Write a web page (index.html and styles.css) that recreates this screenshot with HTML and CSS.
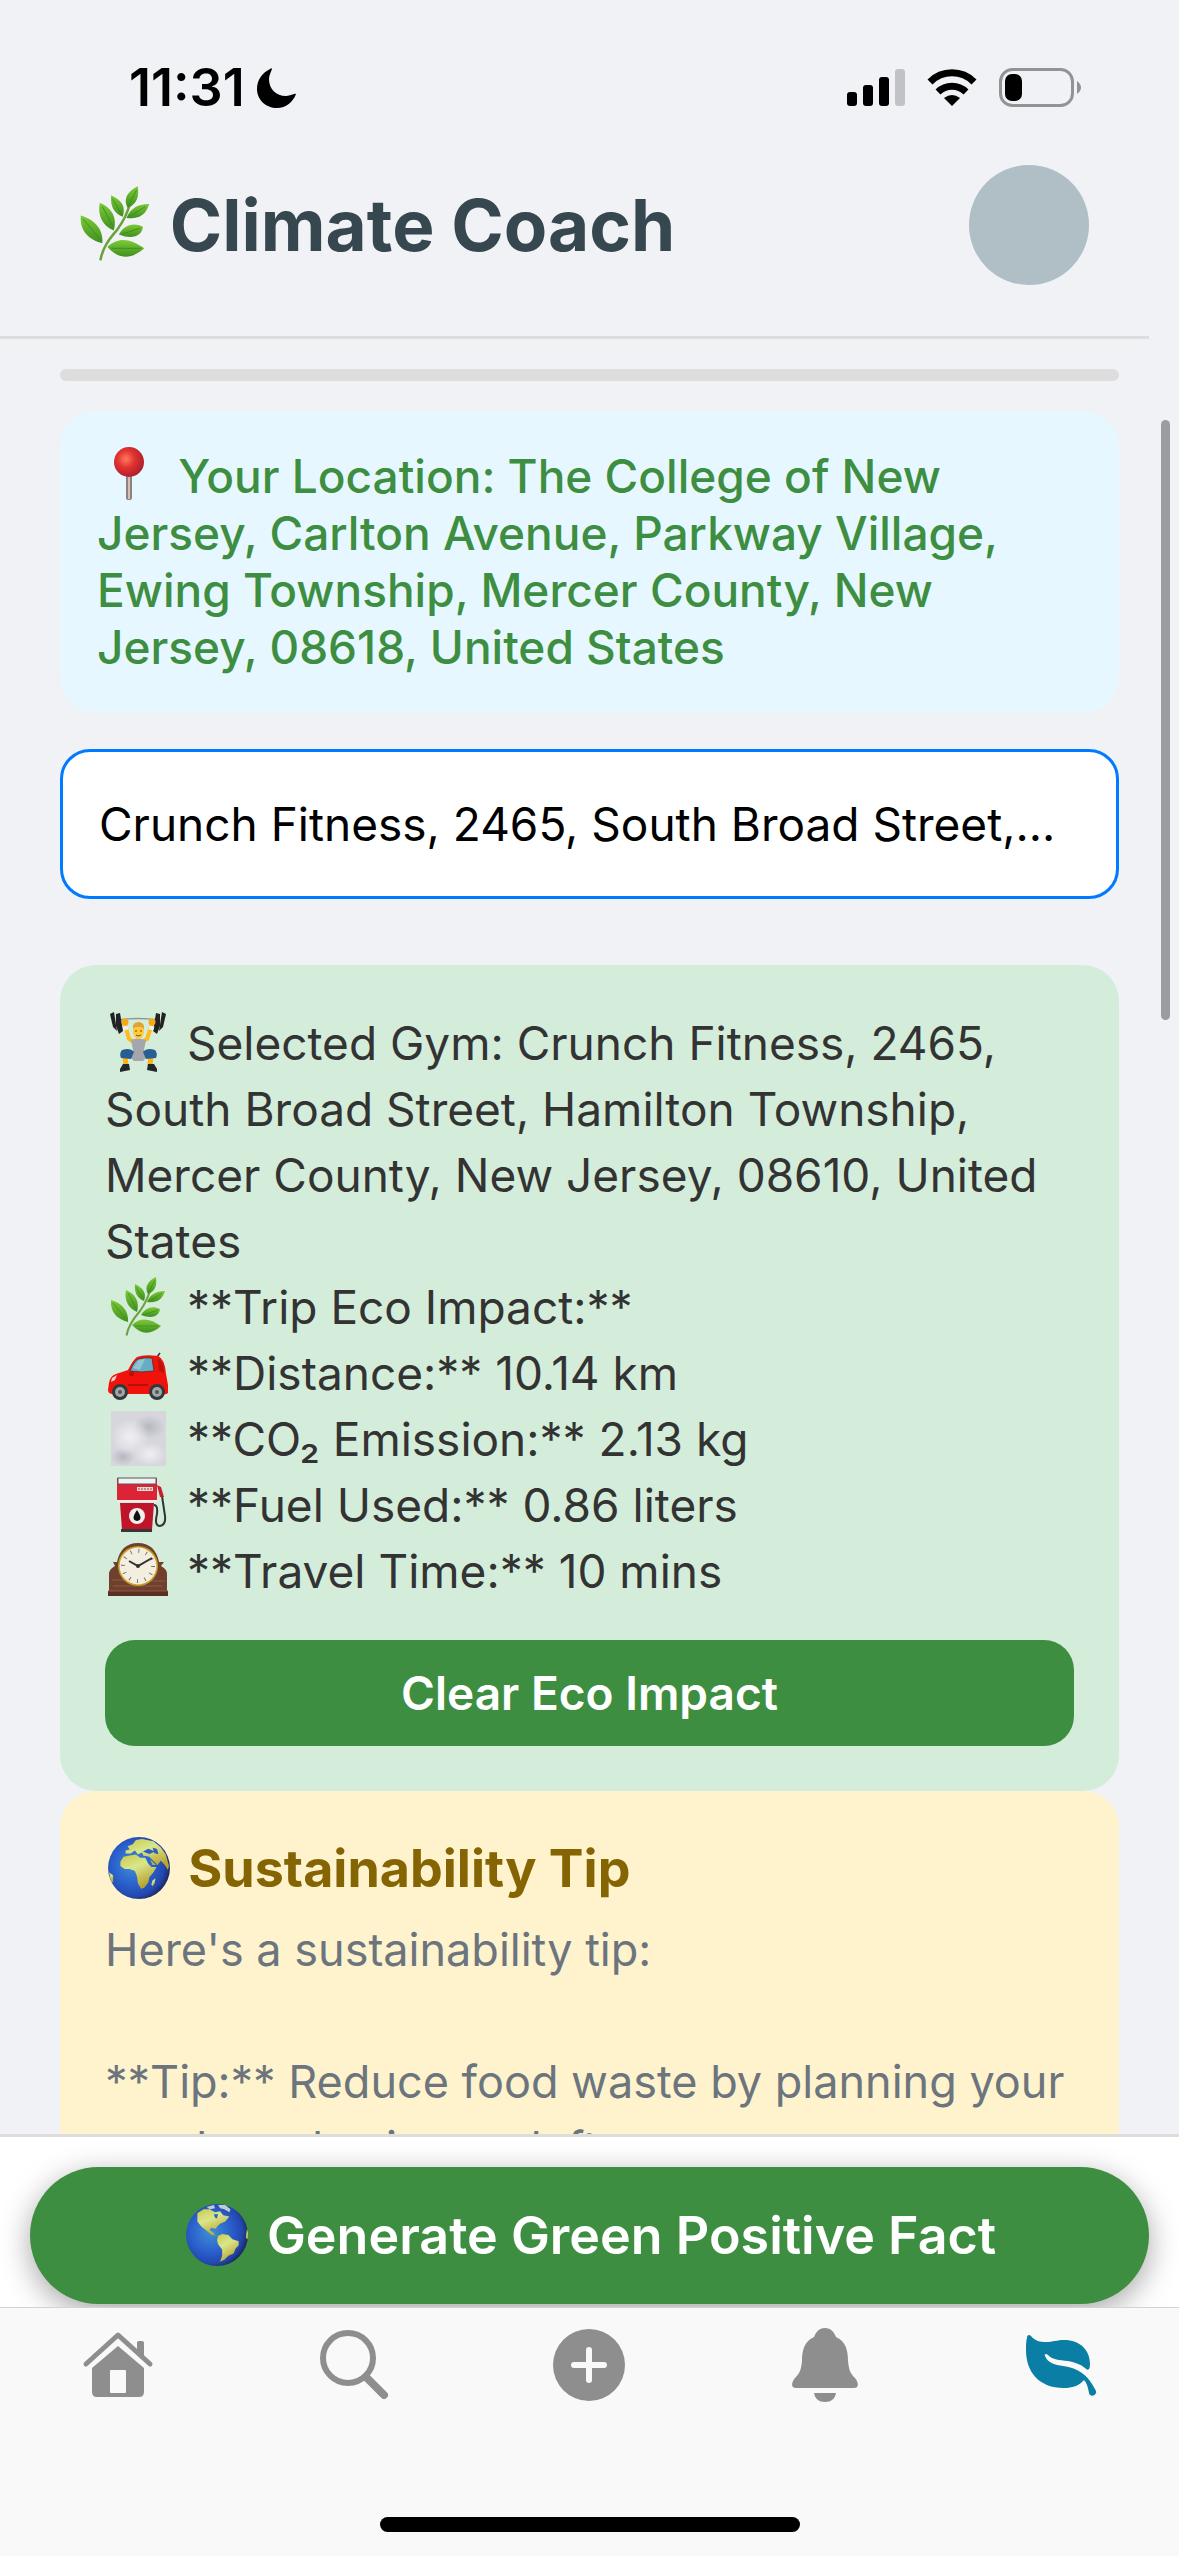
FILE: index.html
```
<!DOCTYPE html>
<html lang="en">
<head>
    <meta charset="UTF-8">
    <meta name="viewport" content="width=device-width, initial-scale=1.0">
    <title>Climate Coach</title>
    <link rel="stylesheet" href="styles.css">
</head>
<body>

    <!-- Shared icon shapes -->
    <svg class="defs" width="0" height="0" aria-hidden="true">
        <defs>
            <linearGradient id="leafFill" x1="0" y1="0" x2="0" y2="1">
                <stop offset="0" stop-color="#7ccb35"/>
                <stop offset="1" stop-color="#3f8f20"/>
            </linearGradient>
            <radialGradient id="ocean" cx="0.4" cy="0.45" r="0.6">
                <stop offset="0" stop-color="#3f8fd4"/>
                <stop offset="0.55" stop-color="#2a5fcc"/>
                <stop offset="0.85" stop-color="#2247ae"/>
                <stop offset="1" stop-color="#1b2a66"/>
            </radialGradient>
            <linearGradient id="land" x1="0" y1="0" x2="0.5" y2="1">
                <stop offset="0" stop-color="#c9c94a"/>
                <stop offset="0.45" stop-color="#d9e68c"/>
                <stop offset="1" stop-color="#b8a42c"/>
            </linearGradient>
            <symbol id="herb" viewBox="0 0 60 60">
                <path d="M18.5 59.5C20 50 25 43 32 35C37 28 40 22 42 14" fill="none" stroke="#6aa33a" stroke-width="2"/>
                <g fill="url(#leafFill)">
                    <path d="M3 24C13 27 21 34 20 46C9 43 2 36 3 24Z"/>
                    <path d="M18 14C27 18 32 25 29 36C20 32 16 24 18 14Z"/>
                    <path d="M27 8C35 12 39 17 36 25C29 22 26 16 27 8Z"/>
                    <path d="M48 1C49 8 48 15 40 18C36 11 40 5 48 1Z"/>
                    <path d="M57 15C54 24 49 27 39 26C42 19 47 15 57 15Z"/>
                    <path d="M52 33C51 41 43 43 33 39C37 32 44 29 52 33Z"/>
                    <path d="M53 50C43 59 33 59 24 49C33 40 43 43 53 50Z"/>
                </g>
                <g fill="none" stroke="#3b8a24" stroke-width="0.7">
                    <path d="M5 27L19 44M20 17L29 34M28 11L36 24M47 4L40 17M54 17L41 25M50 34L35 39M50 50L27 50"/>
                </g>
            </symbol>
            <symbol id="globe-africa" viewBox="0 0 60 60">
                <circle cx="30" cy="30" r="30" fill="url(#ocean)"/>
                <g fill="url(#land)">
                    <path d="M12 24L15 19L21 18L27 17L31 20L36 20L39 26L42 29L47 29L44 34L40 39L39 44L35 49L32 50L29 45L28 38L26 33L21 31L16 31L12 28Z"/>
                    <path d="M17 16L17 13L21 12L19 9L24 7L27 3L33 2L44 4L51 10L56 17L59 28L58 32L55 27L51 23L48 27L43 27L40 19L34 18L33 15L29 17L26 13L22 16Z"/>
                    <path d="M42 46L43 42L46 40L45 45L43 48Z"/>
                    <path d="M1 34L5 37L5 44L3 43Z"/>
                </g>
                <path d="M35 14L39 12L44 14L40 16ZM44 11L47 12L48 16L45 15ZM40 20L47 27" fill="#2b5cc4" stroke="#2b5cc4"/>
            </symbol>
            <symbol id="globe-americas" viewBox="0 0 60 60">
                <circle cx="30" cy="30" r="30" fill="url(#ocean)"/>
                <g fill="url(#land)">
                    <path d="M11 9L17 5L23 5L28 8L33 7L36 11L42 12L38 17L33 19L30 22L29 24L24 23L23 26L26 27L28 30L31 31L25 30L20 26L15 22L11 17Z"/>
                    <path d="M31 31L35 29L41 30L45 34L51 36L51 40L48 43L46 48L41 50L37 54L33 56L35 50L35 44L31 39L30 35Z"/>
                    <path d="M59 24L60 28L60 34L58 33Z"/>
                </g>
                <path d="M31 1L38 1L43 5L42 8L37 5L33 4ZM20 3L27 1L28 4L23 5Z" fill="#c2ccd0"/>
                <path d="M27 10L31 10L30 14L28 13Z" fill="#2b62cc"/>
            </symbol>
        </defs>
    </svg>

    <div class="status-bar">
        <div class="status-left">
            <span class="time">11:31</span>
            <svg width="40" height="40" viewBox="0 0 40 40"><path d="M13 1C5 5 0 12 0 21C0 32 9 40 20 40C29 40 36 34 39 26C38 25 34 28 29 28C19 28 12 21 12 11C12 7 14 4 15 1C15 0 14 0 13 1Z"/></svg>
        </div>
        <div class="status-right">
            <svg width="58" height="38" viewBox="0 0 58 38">
                <rect x="0" y="23" width="10" height="14" rx="3"/>
                <rect x="16" y="16" width="10" height="21" rx="3"/>
                <rect x="32" y="8" width="10" height="29" rx="3"/>
                <rect x="48" y="0" width="10" height="37" rx="3" fill="#c1c2c6"/>
            </svg>
            <svg width="50" height="38" viewBox="0 0 50 38">
                <path d="M3 13A31 31 0 0 1 47 13" fill="none" stroke="#000" stroke-width="7"/>
                <path d="M11 23A20 20 0 0 1 39 23" fill="none" stroke="#000" stroke-width="7"/>
                <path d="M25 37L17 29Q25 23 33 29Z"/>
            </svg>
            <svg width="82" height="40" viewBox="0 0 82 40">
                <rect x="1.5" y="1.5" width="72" height="36" rx="12" fill="none" stroke="#929396" stroke-width="3"/>
                <rect x="6" y="6" width="17" height="27" rx="7"/>
                <path d="M78 13Q82 16 82 19.500Q82 23 78 26Z" fill="#929396"/>
            </svg>
        </div>
    </div>

    <header class="header">
        <h1><svg class="title-icon" aria-hidden="true"><use href="#herb"/></svg> Climate Coach</h1>
        <div class="avatar"></div>
    </header>

    <main class="content">
        <div class="progress-bar"></div>

        <!-- Current location -->
        <p class="location-box"><svg class="emoji" viewBox="0 0 60 60" aria-hidden="true">
                <defs><radialGradient id="pin" cx="0.4" cy="0.4" r="0.65"><stop offset="0" stop-color="#ff7a62"/><stop offset="0.45" stop-color="#e23230"/><stop offset="1" stop-color="#a81f2c"/></radialGradient></defs>
                <rect x="26" y="28" width="6" height="27" rx="2" fill="#8d827f"/>
                <rect x="28" y="28" width="2" height="26" fill="#d8bfb4"/>
                <circle cx="29" cy="17" r="15" fill="url(#pin)"/>
            </svg> Your Location: The College of New Jersey, Carlton Avenue, Parkway Village, Ewing Township, Mercer County, New Jersey, 08618, United States</p>

        <input class="gym-input" type="text" aria-label="Gym" value="Crunch Fitness, 2465, South Broad Street, Hamilton Township, Mercer County, New Jersey, 08610, United States">

        <!-- Trip result -->
        <section class="card eco-card">
            <p><svg class="emoji" viewBox="0 0 60 60" aria-hidden="true">
                    <path d="M9 8Q30 5 51 8" fill="none" stroke="#8b9496" stroke-width="1.500"/>
                    <g fill="#202224">
                        <path d="M2 2L6 0L9 19L5 15Z"/><path d="M8 2L12 1L15 19L11 22L8 14Z"/>
                        <path d="M58 2L54 0L51 19L55 15Z"/><path d="M52 2L48 1L45 19L49 22L52 14Z"/>
                    </g>
                    <path d="M17 12L21 27L26 30M44 12L39 27L34 30" fill="none" stroke="#ffba1c" stroke-width="4"/>
                    <path d="M17 14L18 18M44 14L43 18" stroke="#eef0f0" stroke-width="5"/>
                    <circle cx="17" cy="10" r="3.500" fill="#f5a916"/><circle cx="44" cy="10" r="3.500" fill="#f5a916"/>
                    <path d="M17 43L18 54M43 43L42 54" stroke="#f8b31c" stroke-width="5"/>
                    <path d="M23 28Q30 25 38 28L36 38L38 46L35 49H26L23 46L25 38Z" fill="#a3a6aa"/>
                    <path d="M14 38Q22 35 26 40L23 47L13 46Q11 41 14 38ZM47 38Q39 35 35 40L38 47L48 46Q50 41 47 38Z" fill="#285e91"/>
                    <ellipse cx="30.500" cy="19" rx="5.500" ry="8" fill="#ffc938"/>
                    <path d="M25 17Q24 10 31 10Q37 11 36 17Q33 14 30 15Q27 14 25 17Z" fill="#e0a230"/>
                    <path d="M28 23Q30 25 33 23" fill="none" stroke="#8a4a14"/>
                    <circle cx="28" cy="19" r="0.800" fill="#5b3610"/><circle cx="33" cy="19" r="0.800" fill="#5b3610"/>
                    <path d="M15 52H21L22 58L12 60L12 57ZM46 52H40L39 58L49 60L49 57Z" fill="#22272b"/>
                </svg> Selected Gym: Crunch Fitness, 2465, South Broad Street, Hamilton Township, Mercer County, New Jersey, 08610, United States</p>
            <p><svg class="emoji" aria-hidden="true"><use href="#herb"/></svg> **Trip Eco Impact:**</p>
            <p><svg class="emoji" viewBox="0 0 60 60" aria-hidden="true">
                    <path d="M49 15L52 11" stroke="#333" stroke-width="1.500"/>
                    <path d="M1 41Q2 34 8 32L20 28Q25 18 29 15Q36 12 50 14Q57 17 58 32L60 43V51Q58 53 54 52H5Q0 52 0 48Z" fill="#f1120c"/>
                    <path d="M22 29Q26 19 30 17Q37 15 44 16L46 29Q33 31 22 29Z" fill="#67acc0" stroke="#7b2b25"/>
                    <path d="M25 26L31 18L37 17L32 28Z" fill="#8fc6d4"/>
                    <path d="M50 16Q56 20 56 31L51 29Z" fill="#b91310"/>
                    <path d="M21 32Q22 28 26 30V34H22Z" fill="#b5100c"/>
                    <path d="M4 36L9 33L7 38L3 40Z" fill="#f5d8cc"/>
                    <path d="M20 43H40" stroke="#a80c0c" stroke-width="1.500"/>
                    <circle cx="12" cy="50" r="8" fill="#35383b"/><circle cx="12" cy="50" r="5" fill="#a3a6a7"/><circle cx="12" cy="50" r="2" fill="#55585a"/>
                    <circle cx="49" cy="50" r="8" fill="#35383b"/><circle cx="49" cy="50" r="5" fill="#a3a6a7"/><circle cx="49" cy="50" r="2" fill="#55585a"/>
                </svg> **Distance:** 10.14 km</p>
            <p><svg class="emoji" viewBox="0 0 60 60" aria-hidden="true">
                    <defs>
                        <radialGradient id="mist"><stop offset="0" stop-color="#f0f0f4"/><stop offset="1" stop-color="#f0f0f4" stop-opacity="0"/></radialGradient>
                        <radialGradient id="haze"><stop offset="0" stop-color="#b6b8c1"/><stop offset="1" stop-color="#b6b8c1" stop-opacity="0"/></radialGradient>
                    </defs>
                    <rect x="3" y="3" width="55" height="55" fill="#d6d6dc"/>
                    <ellipse cx="41" cy="19" rx="16" ry="12" fill="url(#haze)"/>
                    <ellipse cx="15" cy="49" rx="12" ry="9" fill="url(#haze)"/>
                    <ellipse cx="22" cy="29" rx="19" ry="18" fill="url(#mist)"/>
                    <ellipse cx="42" cy="46" rx="16" ry="12" fill="url(#mist)"/>
                </svg> **CO₂ Emission:** 2.13 kg</p>
            <p><svg class="emoji" viewBox="0 0 60 60" aria-hidden="true">
                    <path d="M46 31Q50 31 49 40Q46 52 52 52Q58 51 57 42L54 22" fill="none" stroke="#2f3436" stroke-width="2"/>
                    <path d="M49 11L53 13L56 23L52 23Z" fill="#c81f2c"/>
                    <rect x="9" y="4" width="40" height="24" fill="#dc2436"/>
                    <rect x="10" y="4" width="38" height="6" fill="#f2f2f2" stroke="#535b5a"/>
                    <rect x="29" y="13" width="16" height="4" fill="#f0d8d5"/>
                    <path d="M30 15H44" stroke="#8a4545" stroke-dasharray="2 1"/>
                    <path d="M9 27H49" stroke="#ececec" stroke-width="2"/>
                    <path d="M12 29H46L44 56H14Z" fill="#c0142a"/>
                    <path d="M13 55H44V58H13Z" fill="#34383a"/>
                    <circle cx="29" cy="42" r="8" fill="#f4efef"/>
                    <path d="M29 36Q36 46 29 47Q22 46 29 36Z" fill="#111"/>
                </svg> **Fuel Used:** 0.86 liters</p>
            <p><svg class="emoji" viewBox="0 0 60 60" aria-hidden="true">
                    <path d="M1 52V34Q1 29 7 26L5 22H9Q13 3 30 3Q47 3 51 22H56L53 26Q59 29 59 34V52Z" fill="#70402f"/>
                    <rect x="0" y="51" width="60" height="5" fill="#5b3023"/>
                    <path d="M0 51H60M4 40H20M41 41H57M5 46H54" stroke="#8d5844"/>
                    <circle cx="30" cy="26" r="20" fill="#c79d24"/>
                    <circle cx="30" cy="26" r="18.500" fill="#f3eedf"/>
                    <circle cx="30" cy="26" r="15" fill="none" stroke="#6b6861" stroke-width="4" stroke-dasharray="0.850 7.004"/>
                    <path d="M21 21L30 26L44 18" fill="none" stroke="#303030" stroke-width="2"/>
                    <circle cx="30" cy="26" r="2" fill="#303030"/>
                </svg> **Travel Time:** 10 mins</p>
            <button class="clear-btn" type="button">Clear Eco Impact</button>
        </section>

        <section class="card tip-card">
            <h2><svg class="emoji" aria-hidden="true"><use href="#globe-africa"/></svg> Sustainability Tip</h2>
            <p>Here's a sustainability tip:</p>
            <br>
            <p>**Tip:** Reduce food waste by planning your meals and using up leftovers.</p>
        </section>

        <div class="scrollbar"></div>
    </main>

    <div class="action-bar">
        <button class="fact-btn" type="button"><svg class="emoji" aria-hidden="true"><use href="#globe-americas"/></svg> Generate Green Positive Fact</button>
    </div>

    <footer class="bottom">
        <nav class="tab-bar">
            <a href="#home" aria-label="Home"><svg viewBox="0 0 78 78">
                <path d="M7 38L39 9L71 38" fill="none" stroke="currentColor" stroke-width="5" stroke-linecap="round" stroke-linejoin="round"/>
                <path d="M58 25V17Q58 15 60 15H63Q65 15 65 17V31Z"/>
                <path d="M39 20L65 42V66Q65 71 60 71H18Q13 71 13 66V42ZM32 44Q31 44 31 45V66Q31 67 32 67H46Q47 67 47 66V45Q47 44 46 44Z" fill-rule="evenodd"/>
            </svg></a>
            <a href="#search" aria-label="Search"><svg viewBox="0 0 78 78" fill="none" stroke="currentColor">
                <circle cx="33" cy="32" r="25" stroke-width="6"/>
                <path d="M51 51L69 69" stroke-width="8" stroke-linecap="round"/>
            </svg></a>
            <a href="#add" aria-label="Add"><svg viewBox="0 0 78 78">
                <circle cx="39" cy="39" r="36"/>
                <path d="M39 24V54M24 39H54" stroke="#f9f9f9" stroke-width="6" stroke-linecap="round"/>
            </svg></a>
            <a href="#alerts" aria-label="Notifications"><svg viewBox="0 0 78 78">
                <path d="M39 2C45 2 48 6 50 11C59 15 62 23 62 35C63 44 64 47 69 52C73 57 73 62 68 62H10C5 62 5 57 9 52C14 47 15 44 16 35C16 23 19 15 28 11C30 6 33 2 39 2Z"/>
                <path d="M28 67H50C49 73 45 76 39 76C33 76 29 73 28 67Z"/>
            </svg></a>
            <a class="active" href="#coach" aria-label="Climate Coach"><svg viewBox="0 0 78 78">
                <path d="M5 12C5 9 7 8 9 10C13 15 18 16 24 16C31 16 35 14 42 14C58 14 68 24 68 38C68 44 66 45 63 42C58 38 52 36 46 35C37 34 31 34 26 29C24 27 22 28 23 30C26 37 33 39 41 40C57 42 65 50 70 58C73 63 75 66 74 67C73 70 68 71 67 67C66 62 65 57 62 54C57 60 50 62 42 62C17 62 4 46 4 24C4 20 4 15 5 12Z"/>
            </svg></a>
        </nav>
        <div class="home-indicator"></div>
    </footer>

</body>
</html>
```
FILE: styles.css
```
* {
    box-sizing: border-box;
}

body {
    font-family: Inter, "Liberation Sans", sans-serif;
    margin: 0;
    height: 100vh;
    display: flex;
    flex-direction: column;
    background-color: #f0f2f6;
    overflow: hidden;
}

h1, h2, p {
    margin: 0;
}

.defs {
    position: absolute;
}

/* Phone status bar */
.status-bar {
    display: flex;
    flex-shrink: 0;
    justify-content: space-between;
    align-items: center;
    height: 135px;
    padding: 40px 98px 0 129px;
}

.status-left {
    display: flex;
    align-items: center;
    gap: 12px;
}

.status-right {
    display: flex;
    align-items: center;
    gap: 22px;
}

.time {
    font-size: 52px;
    font-weight: 600;
    line-height: 60px;
}

/* Header */
.header {
    display: flex;
    flex-shrink: 0;
    justify-content: space-between;
    align-items: center;
    margin-right: 30px;
    padding: 30px 60px 51px 77px;
    border-bottom: 3px solid #ddd;
}

.header h1 {
    color: #37474f;
    font-size: 71px;
    font-weight: 700;
    line-height: 86px;
}

.title-icon {
    width: 76px;
    height: 76px;
    margin-bottom: -10px;
}

.avatar {
    width: 120px;
    height: 120px;
    border-radius: 50%;
    background-color: #b0bec5;
}

/* Scrolling content */
.content {
    position: relative;
    flex: 1;
    min-height: 0;
    padding: 30px 60px 0;
    overflow: hidden;
}

.progress-bar {
    height: 12px;
    margin-bottom: 30px;
    border-radius: 6px;
    background-color: #ddd;
}

/* Inline pictures hang a little below the text baseline */
.emoji {
    width: 60px;
    height: 60px;
    margin: -8px 6px -12px 3px;
}

.location-box {
    margin-bottom: 36px;
    padding: 37px;
    border-radius: 36px;
    background-color: #e6f7ff;
    color: #3d8e41;
    font-size: 46px;
    font-weight: 500;
    line-height: 57px;
}

.gym-input {
    display: block;
    width: 100%;
    height: 150px;
    margin-bottom: 66px;
    padding: 0 48px 0 36px;
    border: 3px solid #007aff;
    border-radius: 30px;
    background-color: #fff;
    color: #000;
    font-family: inherit;
    font-size: 46px;
    text-overflow: ellipsis;
}

.card {
    padding: 45px;
    border-radius: 36px;
    font-size: 46px;
    line-height: 66px;
}

.eco-card {
    background-color: #d4edda;
    color: #333;
}

.tip-card {
    background-color: #fff3cd;
    color: #6c757d;
    font-size: 45px;
}

.tip-card h2 {
    margin-bottom: 15px;
    color: #856404;
    font-size: 52px;
    font-weight: 700;
    line-height: 66px;
}

.tip-card .emoji,
.fact-btn .emoji {
    width: 62px;
    height: 62px;
}

button {
    display: block;
    width: 100%;
    border: none;
    background-color: #3d8e41;
    color: #fff;
    font-family: inherit;
    font-weight: 600;
    cursor: pointer;
}

.clear-btn {
    margin-top: 36px;
    padding: 24px;
    border-radius: 30px;
    font-size: 46px;
    line-height: 58px;
}

.scrollbar {
    position: absolute;
    top: 81px;
    right: 9px;
    width: 9px;
    height: 600px;
    border-radius: 5px;
    background-color: #9b9c9f;
}

/* Bottom action */
.action-bar {
    flex-shrink: 0;
    padding: 30px 30px 3px;
    border-top: 3px solid #ddd;
    background-color: #fff;
    overflow: hidden;
}

.fact-btn {
    padding: 36px;
    border-radius: 69px;
    font-size: 52px;
    line-height: 65px;
    box-shadow: 0 8px 30px rgba(0, 0, 0, 0.35);
}

/* Tab bar */
.bottom {
    display: flex;
    flex-direction: column;
    flex-shrink: 0;
    gap: 113px;
    padding: 18px 0 24px;
    border-top: 1px solid #d3d3d4;
    background-color: #f9f9f9;
}

.tab-bar {
    display: flex;
}

.tab-bar a {
    flex: 1;
    display: flex;
    justify-content: center;
    color: #8e8e8e;
}

.tab-bar a.active {
    color: #0a7ea4;
}

.tab-bar svg {
    width: 78px;
    height: 78px;
    fill: currentColor;
}

.tab-bar svg[fill="none"] {
    fill: none;
}

.home-indicator {
    align-self: center;
    width: 420px;
    height: 15px;
    border-radius: 8px;
    background-color: #000;
}
```
